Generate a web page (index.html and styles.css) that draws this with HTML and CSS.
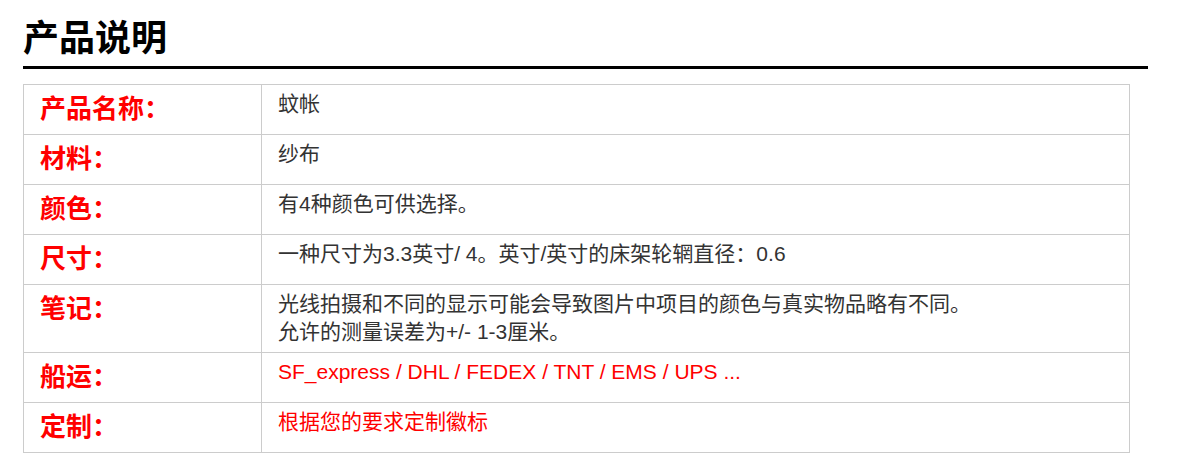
FILE: index.html
```html
<!DOCTYPE html>
<html lang="zh">
<head>
<meta charset="utf-8">
<title>产品说明</title>
<link rel="stylesheet" href="styles.css">
</head>
<body>
<div class="page">
  <h1 class="title">产品说明</h1>
  <table class="spec">
    <tr><th class="label">产品名称：</th><td class="value">蚊帐</td></tr>
    <tr><th class="label">材料：</th><td class="value">纱布</td></tr>
    <tr><th class="label">颜色：</th><td class="value">有4种颜色可供选择。</td></tr>
    <tr><th class="label">尺寸：</th><td class="value">一种尺寸为3.3英寸/ 4。英寸/英寸的床架轮辋直径：0.6</td></tr>
    <tr><th class="label">笔记：</th><td class="value">光线拍摄和不同的显示可能会导致图片中项目的颜色与真实物品略有不同。<br>允许的测量误差为+/- 1-3厘米。</td></tr>
    <tr><th class="label">船运：</th><td class="value red">SF_express / DHL / FEDEX / TNT / EMS / UPS ...</td></tr>
    <tr><th class="label">定制：</th><td class="value red">根据您的要求定制徽标</td></tr>
  </table>
</div>
</body>
</html>
```

FILE: styles.css
```css
html, body {
  margin: 0;
  padding: 0;
  background: #fff;
}
body {
  font-family: "Liberation Sans", "Noto Sans CJK SC", sans-serif;
}
.page {
  padding: 0 0 0 23px;
  width: 1125px;
}
.title {
  margin: 0;
  padding: 17px 0 5px;
  font-size: 36px;
  line-height: 44px;
  font-weight: bold;
  color: #000;
  border-bottom: 3px solid #000;
}
.spec {
  margin-top: 15px;
  width: 1107px;
  border-collapse: collapse;
}
.spec th, .spec td {
  border: 1px solid #ccc;
  padding: 5px 16px 6px;
  vertical-align: top;
  text-align: left;
}
.label {
  width: 205px;
  font-size: 26px;
  line-height: 38px;
  font-weight: bold;
  color: #ff0000;
}
.value {
  font-size: 21px;
  line-height: 28px;
  font-weight: normal;
  color: #333;
  padding-left: 15px;
}
.value.red {
  color: #ff0000;
}
```
